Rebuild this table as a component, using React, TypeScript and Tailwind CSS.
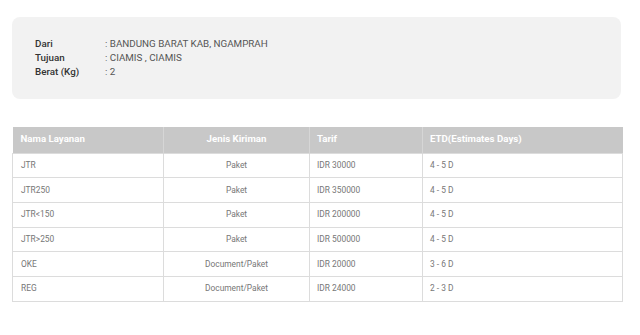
import React from 'react';

interface Layanan {
  nama: string;
  jenis: string;
  tarif: string;
  etd: string;
}

const rows: Layanan[] = [
  { nama: 'JTR', jenis: 'Paket', tarif: 'IDR 30000', etd: '4 - 5 D' },
  { nama: 'JTR250', jenis: 'Paket', tarif: 'IDR 350000', etd: '4 - 5 D' },
  { nama: 'JTR<150', jenis: 'Paket', tarif: 'IDR 200000', etd: '4 - 5 D' },
  { nama: 'JTR>250', jenis: 'Paket', tarif: 'IDR 500000', etd: '4 - 5 D' },
  { nama: 'OKE', jenis: 'Document/Paket', tarif: 'IDR 20000', etd: '3 - 6 D' },
  { nama: 'REG', jenis: 'Document/Paket', tarif: 'IDR 24000', etd: '2 - 3 D' },
];

const info = [
  { label: 'Dari', value: ': BANDUNG BARAT KAB, NGAMPRAH' },
  { label: 'Tujuan', value: ': CIAMIS , CIAMIS' },
  { label: 'Berat (Kg)', value: ': 2' },
];

export default function App() {
  return (
    <div className="w-[640px] h-[335px] bg-white pt-[17px] pl-3 pr-[19px] font-['Roboto',sans-serif]">
      <div className="bg-[#f2f2f2] rounded-lg h-[82px] pl-[23px] pt-[20px]">
        {info.map((item) => (
          <div key={item.label} className="flex text-[9.8px] leading-[14px]">
            <span className="w-[70px] font-medium text-[#333]">{item.label}</span>
            <span className="text-[#555]">{item.value}</span>
          </div>
        ))}
      </div>

      <table className="mt-7 w-[610px] border-collapse table-fixed">
        <colgroup>
          <col className="w-[151px]" />
          <col className="w-[146px]" />
          <col className="w-[113px]" />
          <col className="w-[200px]" />
        </colgroup>
        <thead>
          <tr className="bg-[#c8c8c8] text-white text-[9.7px] font-bold h-[26px]">
            <th className="text-left pl-2 border-r border-[#d6d6d6]">Nama Layanan</th>
            <th className="text-center border-r border-[#d6d6d6]">Jenis Kiriman</th>
            <th className="text-left pl-[7px] border-r border-[#d6d6d6]">Tarif</th>
            <th className="text-left pl-[7px]">ETD(Estimates Days)</th>
          </tr>
        </thead>
        <tbody className="text-[8.4px] text-[#777]">
          {rows.map((r) => (
            <tr key={r.nama} className="h-[24.7px]">
              <td className="pl-2 border border-[#dcdcdc]">{r.nama}</td>
              <td className="text-center border border-[#dcdcdc]">{r.jenis}</td>
              <td className="pl-[7px] border border-[#dcdcdc]">{r.tarif}</td>
              <td className="pl-[7px] border border-[#dcdcdc]">{r.etd}</td>
            </tr>
          ))}
        </tbody>
      </table>
    </div>
  );
}
